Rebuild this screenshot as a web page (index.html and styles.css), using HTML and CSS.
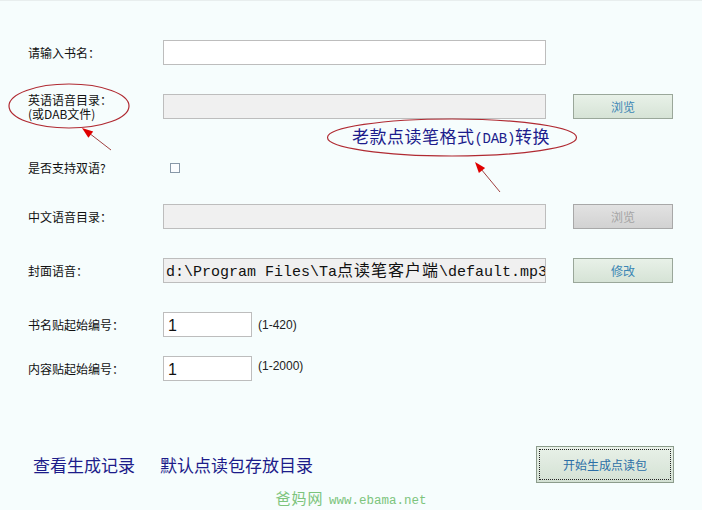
FILE: index.html
```html
<!DOCTYPE html>
<html>
<head>
<meta charset="utf-8" />
<title>点读包生成</title>
<link rel="stylesheet" href="styles.css">
</head>
<body>
<div class="page">
  <div class="form">
    <div class="row">
      <span class="lbl">请输入书名：</span>
      <div class="box"></div>
    </div>
    <div class="row r2">
      <span class="lbl"><span class="ln">英语语音目录：</span><span class="ln">(或DAB文件)</span></span>
      <div class="box off"></div>
      <span class="btn">浏览</span>
    </div>
    <div class="row r3">
      <span class="lbl">是否支持双语?</span>
      <span class="chk"></span>
    </div>
    <div class="row r4">
      <span class="lbl">中文语音目录：</span>
      <div class="box off"></div>
      <span class="btn dis">浏览</span>
    </div>
    <div class="row r5">
      <span class="lbl">封面语音：</span>
      <div class="box off path">d:\Program Files\Ta<span class="cjk">点读笔客户端</span>\default.mp3</div>
      <span class="btn">修改</span>
    </div>
    <div class="row r6">
      <span class="lbl">书名贴起始编号：</span>
      <div class="box num">1</div>
      <span class="range">(1-420)</span>
    </div>
    <div class="row r7">
      <span class="lbl">内容贴起始编号：</span>
      <div class="box num">1</div>
      <span class="range up">(1-2000)</span>
    </div>
  </div>

  <div class="foot">
    <a class="lnk">查看生成记录</a>
    <a class="lnk second">默认点读包存放目录</a>
    <span class="go"><span class="ring">开始生成点读包</span></span>
  </div>

  <div class="mark"><span class="mcjk">爸妈网</span> <span class="mlat">www.ebama.net</span></div>

  <svg class="notes" width="702" height="510" viewBox="0 0 702 510">
    <ellipse cx="69" cy="106" rx="60" ry="22" fill="none" stroke="#b02a32" stroke-width="1.2"/>
    <ellipse cx="452" cy="137.5" rx="124.5" ry="18.5" fill="none" stroke="#b02a32" stroke-width="1.2"/>
    <line x1="111" y1="150" x2="89" y2="133" stroke="#a04040" stroke-width="1"/>
    <polygon points="82,128 93.2,131.4 88.4,137.8" fill="#e00000"/>
    <line x1="500" y1="192" x2="481" y2="169" stroke="#a04040" stroke-width="1"/>
    <polygon points="475,162 485.1,167.9 478.9,173" fill="#e00000"/>
  </svg>
  <div class="tip">老款点读笔格式<span class="tlat">(DAB)</span>转换</div>
</div>
</body>
</html>
```

FILE: styles.css
```css
*{margin:0;padding:0;box-sizing:border-box;}
body{background:#f6fdfd;font-family:"Noto Sans CJK SC",sans-serif;font-size:12px;color:#111;}
.page{position:relative;width:702px;height:510px;overflow:hidden;box-shadow:inset 0 1px 0 #e8eeee;}

.form{padding:40px 0 0 28px;}
.row{display:flex;align-items:center;height:25px;}
.r2{margin-top:29px;}
.r3{margin-top:36px;}
.r4{margin-top:24px;}
.r5{margin-top:29px;}
.r6{margin-top:29px;}
.r7{margin-top:19px;}
.lbl{width:135px;line-height:14px;}
.ln{display:block;height:14px;}

.box{width:383px;height:25px;border:1px solid #bdbdbd;background:#fff;overflow:hidden;white-space:nowrap;}
.box.off{background:#f0f0f0;}
.path{font-family:"Liberation Mono",monospace;font-size:15px;line-height:21px;padding-left:2px;color:#111;}
.path .cjk{font-family:"Noto Sans CJK SC",sans-serif;font-size:16px;letter-spacing:1px;}
.num{width:89px;font-family:"Liberation Sans",sans-serif;font-size:16px;line-height:25px;padding-left:4px;color:#111;}
.range{margin-left:6px;font-family:"Liberation Sans",sans-serif;font-size:12px;color:#222;}
.range.up{margin-bottom:5px;}

.btn{margin-left:27px;width:100px;height:25px;border:1px solid #9aa79a;background:linear-gradient(#e8f1e8,#d6e3d6);color:#3a86b4;text-align:center;line-height:23px;font-size:12px;}
.btn.dis{border-color:#a8a8a8;background:linear-gradient(#e2e2e2,#d2d2d2);color:#a4a4a4;}
.chk{margin-left:7px;width:10px;height:10px;border:1px solid #8898a8;background:#fbfdff;}

.foot{display:flex;align-items:center;height:37px;margin-top:65px;padding:0 28px 0 33px;}
.lnk{font-size:17px;color:#1c1c8a;}
.lnk.second{margin-left:25px;}
.go{margin-left:auto;width:138px;height:37px;border:1px solid #8c9c8c;background:linear-gradient(#e8f1e8,#d4e1d4);padding:2px;}
.ring{display:block;height:100%;border:1px dotted #222;text-align:center;line-height:29px;color:#2c6fa6;font-size:12px;}

.mark{margin-top:6px;text-align:center;color:#7cc47c;line-height:17px;}
.mcjk{font-size:15px;letter-spacing:1px;}
.mlat{font-family:"Liberation Mono",monospace;font-size:12.5px;margin-left:3px;}

.notes{position:absolute;left:0;top:0;pointer-events:none;}
.tip{position:absolute;left:352px;top:125px;font-size:17px;line-height:22px;color:#1c1c8c;letter-spacing:0.5px;}
.tip .tlat{font-family:"Liberation Mono",monospace;font-size:14px;letter-spacing:-0.3px;}
```
